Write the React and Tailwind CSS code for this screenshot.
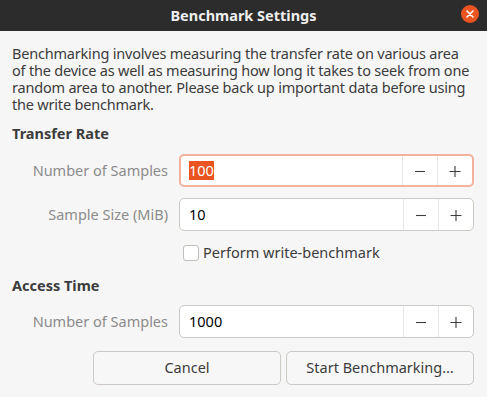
import React from 'react';

const Minus = () => (
  <svg width="12" height="12" viewBox="0 0 12 12" className="text-[#3d3d3d]">
    <path d="M1 6.5h10" stroke="currentColor" strokeWidth="1.1" />
  </svg>
);

const Plus = () => (
  <svg width="12" height="12" viewBox="0 0 12 12" className="text-[#3d3d3d]">
    <path d="M0.5 6.5h11M6 1v11" stroke="currentColor" strokeWidth="1.1" />
  </svg>
);

// GTK-style spin button: entry + minus + plus
const SpinButton = ({ value, focused }) => (
  <div
    className={`flex h-[33px] flex-1 rounded-[5px] bg-white ${
      focused ? 'border-2 border-[#f3b29d]' : 'border border-[#cdc9c5]'
    }`}
  >
    <div className={`flex flex-1 items-center ${focused ? 'pl-[8px]' : 'pl-[9px]'}`}>
      {focused ? (
        <span className="bg-[#e95420] leading-[19px] text-white">{value}</span>
      ) : (
        <span className="text-black">{value}</span>
      )}
    </div>
    <div className="flex w-[35px] items-center justify-center border-l border-[#e6e6e6]">
      <Minus />
    </div>
    <div className="flex w-[35px] items-center justify-center border-l border-[#e6e6e6]">
      <Plus />
    </div>
  </div>
);

const Row = ({ label, value, focused, className = '' }) => (
  <div className={`flex items-center ${className}`}>
    <div className="w-[156px] text-right text-[#8c8c8c]">{label}</div>
    <div className="ml-[11px] flex flex-1">
      <SpinButton value={value} focused={focused} />
    </div>
  </div>
);

const App = () => {
  return (
    <div
      className="flex h-[397px] w-[487px] flex-col overflow-hidden bg-[#f6f6f6] text-[14.5px] text-[#3c3c3c]"
      style={{ fontFamily: '"Noto Sans", "Open Sans", sans-serif' }}
    >
      {/* Title bar */}
      <div className="relative flex h-[31px] items-center justify-center bg-[#2c2c2c]">
        <span className="text-[14.5px] font-bold text-[#efefef]">Benchmark Settings</span>
        <div className="absolute right-[8px] top-[5px] flex h-[18px] w-[18px] items-center justify-center rounded-full bg-[#e95420]">
          <svg width="8" height="8" viewBox="0 0 8 8">
            <path d="M1 1l6 6M7 1L1 7" stroke="white" strokeWidth="1.6" strokeLinecap="round" />
          </svg>
        </div>
      </div>

      <div className="flex flex-col pl-[12px] pr-[13px] pt-[14px]">
        {/* Description */}
        <p className="leading-[17px] tracking-[-0.2px]">
          Benchmarking involves measuring the transfer rate on various area
          <br />
          of the device as well as measuring how long it takes to seek from one
          <br />
          random area to another. Please back up important data before using
          <br />
          the write benchmark.
        </p>

        <div className="mt-[12px] font-bold leading-[17px]">Transfer Rate</div>

        <Row className="mt-[12px]" label="Number of Samples" value="100" focused />
        <Row className="mt-[11px]" label="Sample Size (MiB)" value="10" />

        {/* Checkbox */}
        <div className="ml-[171px] mt-[13px] flex h-[18px] items-center">
          <div className="h-[16px] w-[16px] rounded-[3px] border border-[#c2bdb8] bg-white" />
          <span className="ml-[4px]">Perform write-benchmark</span>
        </div>

        <div className="mt-[15px] font-bold leading-[17px]">Access Time</div>

        <Row className="mt-[11px]" label="Number of Samples" value="1000" />

        {/* Buttons */}
        <div className="mt-[13px] flex justify-end gap-[5px]">
          <button className="h-[34px] w-[188px] rounded-[5px] border border-[#cdc9c5] bg-[#f7f7f7] text-[#3c3c3c]">
            Cancel
          </button>
          <button className="h-[34px] w-[188px] rounded-[5px] border border-[#cdc9c5] bg-[#f7f7f7] text-[#3c3c3c]">
            Start Benchmarking…
          </button>
        </div>
      </div>
    </div>
  );
};

export default App;
